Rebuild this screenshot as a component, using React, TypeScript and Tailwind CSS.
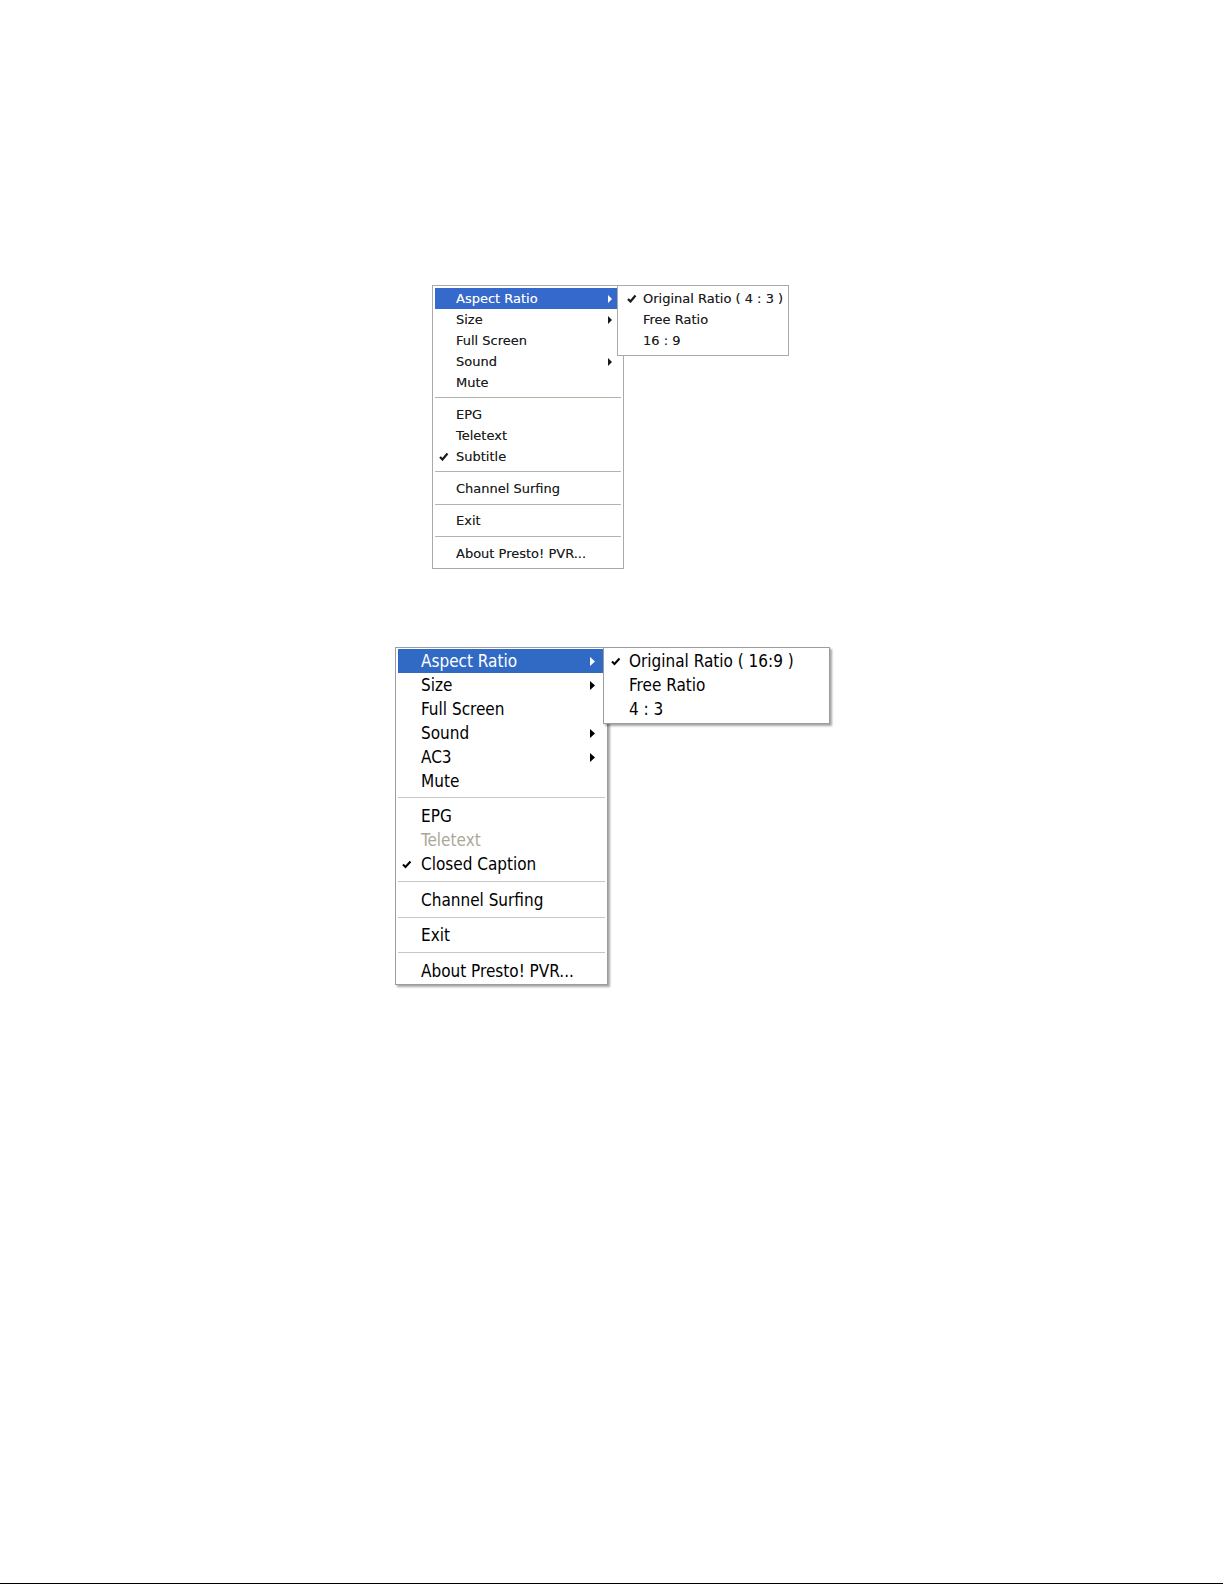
import React from "react";

type Item =
  | { sep: true; cls: string }
  | {
      sep?: false;
      label: string;
      check?: boolean;
      arrow?: boolean;
      active?: boolean;
      disabled?: boolean;
    };

const Check = ({ size }: { size: "s" | "l" }) =>
  size === "l" ? (
    <svg width="10" height="9" viewBox="0 0 10 9" className="block">
      <polyline points="1,4.5 3.5,7 8.5,1.5" fill="none" stroke="#000" strokeWidth="2" />
    </svg>
  ) : (
    <svg width="10" height="9" viewBox="0 0 10 9" className="block">
      <polyline points="1,5 3.5,7.5 8.5,1.5" fill="none" stroke="#1a1a1a" strokeWidth="2.2" />
    </svg>
  );

const Arrow = ({ white, size }: { white?: boolean; size: "s" | "l" }) =>
  size === "l" ? (
    <svg width="5" height="9" viewBox="0 0 5 9" className="block">
      <polygon points="0,0 5,4.5 0,9" fill={white ? "#fff" : "#000"} />
    </svg>
  ) : (
    <svg width="4" height="8" viewBox="0 0 4 8" className="block">
      <polygon points="0,0 4,4 0,8" fill={white ? "#fff" : "#1a1a1a"} />
    </svg>
  );

function SmallMenu() {
  const items: Item[] = [
    { label: "Aspect Ratio", arrow: true, active: true },
    { label: "Size", arrow: true },
    { label: "Full Screen" },
    { label: "Sound", arrow: true },
    { label: "Mute" },
    { sep: true, cls: "h-[11px] pt-[4px]" },
    { label: "EPG" },
    { label: "Teletext" },
    { label: "Subtitle", check: true },
    { sep: true, cls: "h-[11px] pt-[4px]" },
    { label: "Channel Surfing" },
    { sep: true, cls: "h-[11px] pt-[5px]" },
    { label: "Exit" },
    { sep: true, cls: "h-[12px] pt-[5px]" },
    { label: "About Presto! PVR..." },
  ];
  const sub = [
    { label: "Original Ratio ( 4 : 3 )", check: true },
    { label: "Free Ratio" },
    { label: "16 : 9" },
  ];
  return (
    <div
      className="relative w-[192px] [text-shadow:0_0_0.6px_rgba(0,0,0,0.45)]"
      style={{ fontFamily: '"DejaVu Sans", sans-serif' }}
    >
      <div className="flex h-[284px] w-[192px] flex-col border border-[#aaaaaa] bg-white px-[2px] pt-[2px] text-[13px] text-[#1c1c1c]">
        {items.map((it, i) =>
          it.sep ? (
            <div key={i} className={it.cls}>
              <div className="h-px bg-[#b8b3a6]" />
            </div>
          ) : (
            <div
              key={i}
              className={
                "flex h-[21px] items-center " +
                (it.active ? "bg-[#3569cc] text-white [text-shadow:0_0_0.6px_rgba(255,255,255,0.5)]" : "")
              }
            >
              <div className="flex w-[21px] pl-[4px]">{it.check && <Check size="s" />}</div>
              <span className="flex-1 leading-none">{it.label}</span>
              <div className="flex w-[13px]">{it.arrow && <Arrow size="s" white={it.active} />}</div>
            </div>
          )
        )}
      </div>
      <div className="absolute left-[185px] top-0 flex h-[71px] w-[172px] flex-col border border-[#aaaaaa] bg-white pt-[2px] text-[13px] text-[#1c1c1c]">
        {sub.map((it, i) => (
          <div key={i} className="flex h-[21px] items-center">
            <div className="flex w-[25px] pl-[9px]">{it.check && <Check size="s" />}</div>
            <span className="leading-none">{it.label}</span>
          </div>
        ))}
      </div>
    </div>
  );
}

function LargeMenu() {
  const items: Item[] = [
    { label: "Aspect Ratio", arrow: true, active: true },
    { label: "Size", arrow: true },
    { label: "Full Screen" },
    { label: "Sound", arrow: true },
    { label: "AC3", arrow: true },
    { label: "Mute" },
    { sep: true, cls: "h-[11px] pt-[4px]" },
    { label: "EPG" },
    { label: "Teletext", disabled: true },
    { label: "Closed Caption", check: true },
    { sep: true, cls: "h-[12px] pt-[5px]" },
    { label: "Channel Surfing" },
    { sep: true, cls: "h-[11px] pt-[5px]" },
    { label: "Exit" },
    { sep: true, cls: "h-[12px] pt-[5px]" },
    { label: "About Presto! PVR..." },
  ];
  const sub = [
    { label: "Original Ratio ( 16:9 )", check: true },
    { label: "Free Ratio" },
    { label: "4 : 3" },
  ];
  return (
    <div
      className="relative w-[213px]"
      style={{ fontFamily: '"DejaVu Sans Condensed", "DejaVu Sans", sans-serif', fontStretch: "condensed" }}
    >
      <div className="flex h-[338px] w-[213px] flex-col border border-[#9c9c9c] bg-white px-[2px] pt-[1px] text-[17px] text-black shadow-[2px_2px_2px_rgba(0,0,0,0.35)]">
        {items.map((it, i) =>
          it.sep ? (
            <div key={i} className={it.cls}>
              <div className="h-px bg-[#c6c6c6]" />
            </div>
          ) : (
            <div
              key={i}
              className={
                "flex h-[24px] items-center " +
                (it.active ? "bg-[#316ac5] text-white" : it.disabled ? "text-[#aca899]" : "")
              }
            >
              <div className="flex w-[23px] pl-[4px]">{it.check && <Check size="l" />}</div>
              <span className="flex-1 leading-none">{it.label}</span>
              <div className="flex w-[15px]">{it.arrow && <Arrow size="l" white={it.active} />}</div>
            </div>
          )
        )}
      </div>
      <div className="absolute left-[208px] top-0 flex h-[77px] w-[227px] flex-col border border-[#9c9c9c] bg-white pt-[1px] text-[17px] text-black shadow-[2px_2px_2px_rgba(0,0,0,0.35)]">
        {sub.map((it, i) => (
          <div key={i} className="flex h-[24px] items-center">
            <div className="flex w-[25px] pl-[7px]">{it.check && <Check size="l" />}</div>
            <span className="leading-none">{it.label}</span>
          </div>
        ))}
      </div>
    </div>
  );
}

export default function App() {
  return (
    <div className="flex h-[1585px] w-[1225px] flex-col bg-white">
      <div className="pl-[432px] pt-[285px]">
        <SmallMenu />
      </div>
      <div className="pl-[395px] pt-[78px]">
        <LargeMenu />
      </div>
      <div className="mt-auto mb-px h-px w-[1223px] bg-black" />
    </div>
  );
}
